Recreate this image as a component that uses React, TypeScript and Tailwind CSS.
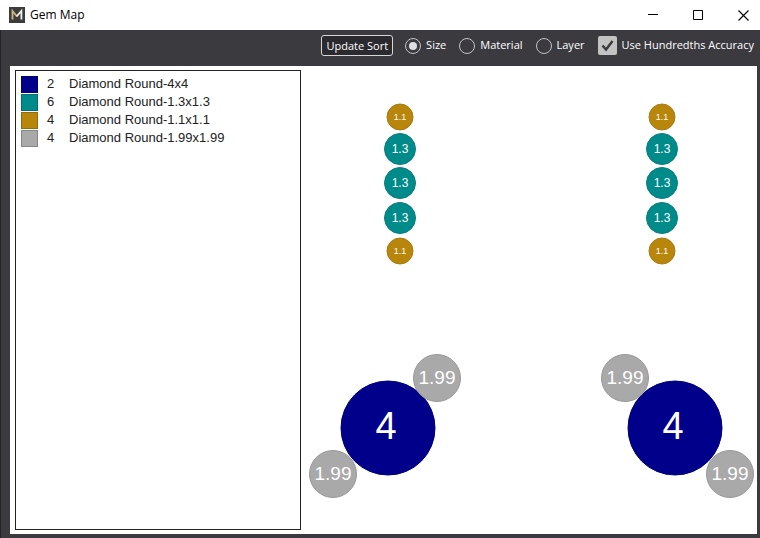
import { useState } from "react";

type Gem = { x: number; y: number; size: string };

const legend = [
  { count: 2, name: "Diamond Round-4x4", swatch: "bg-[#00008b]" },
  { count: 6, name: "Diamond Round-1.3x1.3", swatch: "bg-[#008b8b]" },
  { count: 4, name: "Diamond Round-1.1x1.1", swatch: "bg-[#b8860b]" },
  { count: 4, name: "Diamond Round-1.99x1.99", swatch: "bg-[#a9a9a9]" },
];

const gemStyles: Record<string, { r: number; circle: string; label: string; dx: number; dy: number }> = {
  "1.1": { r: 13, circle: "fill-[#b8860b] stroke-[#a87c14]", label: "text-[9px]", dx: 0, dy: 3 },
  "1.3": { r: 15.5, circle: "fill-[#008b8b] stroke-[#0c7d7d]", label: "text-[12px]", dx: 0, dy: 4 },
  "1.99": { r: 23.5, circle: "fill-[#a9a9a9] stroke-[#999999]", label: "text-[19px]", dx: 0, dy: 6 },
  "4": { r: 47, circle: "fill-[#00008b] stroke-[#00007c]", label: "text-[38px]", dx: -2, dy: 11 },
};

const gems: Gem[] = [
  { x: 99, y: 51, size: "1.1" },
  { x: 99, y: 83, size: "1.3" },
  { x: 99, y: 117, size: "1.3" },
  { x: 99, y: 152, size: "1.3" },
  { x: 99, y: 185, size: "1.1" },
  { x: 361, y: 51, size: "1.1" },
  { x: 361, y: 83, size: "1.3" },
  { x: 361, y: 117, size: "1.3" },
  { x: 361, y: 152, size: "1.3" },
  { x: 361, y: 185, size: "1.1" },
  { x: 87, y: 362, size: "4" },
  { x: 136, y: 312, size: "1.99" },
  { x: 32, y: 408, size: "1.99" },
  { x: 374, y: 362, size: "4" },
  { x: 324, y: 312, size: "1.99" },
  { x: 429, y: 408, size: "1.99" },
];

const sortModes = ["Size", "Material", "Layer"];

function TitleBar() {
  return (
    <header className="flex h-[30px] items-center bg-white pl-[9px] text-black">
      <svg className="h-4 w-4" viewBox="0 0 16 16" aria-hidden="true">
        <rect width="16" height="16" fill="#3c3c3a" />
        <path d="M3.5 12.5V4L8 9.5" fill="none" stroke="#c9b886" strokeWidth="1.8" />
        <path d="M7.6 9.5L12.4 4v8.5" fill="none" stroke="#f2f0ea" strokeWidth="1.8" />
      </svg>
      <h1 className="ml-[5px] text-[12px]">Gem Map</h1>
      <div className="ml-auto flex h-full">
        <button className="flex w-[46px] items-center justify-center" aria-label="Minimize">
          <svg className="h-[11px] w-[11px]" viewBox="0 0 11 11" aria-hidden="true">
            <path d="M0 4.5h10" stroke="currentColor" />
          </svg>
        </button>
        <button className="flex w-[45px] items-center justify-center" aria-label="Maximize">
          <svg className="h-[11px] w-[11px]" viewBox="0 0 11 11" aria-hidden="true">
            <path d="M.5 .5h9v9h-9z" fill="none" stroke="currentColor" />
          </svg>
        </button>
        <button className="flex w-[39px] items-center pl-[17px]" aria-label="Close">
          <svg className="h-[11px] w-[11px] flex-none" viewBox="0 0 11 11" aria-hidden="true">
            <path d="M.5 .5l10 10M10.5 .5l-10 10" stroke="currentColor" strokeWidth="1.1" />
          </svg>
        </button>
      </div>
    </header>
  );
}

function Toolbar() {
  const [mode, setMode] = useState("Size");
  const [hundredths, setHundredths] = useState(true);

  return (
    <div className="flex h-9 items-center justify-end pr-[6px] pb-[5px] text-[11px] text-white">
      <button className="mr-3 h-[21px] rounded-[3px] border border-[#d8d8da] bg-[#2b2a2f] px-1 leading-none">
        Update Sort
      </button>
      {sortModes.map((m) => (
        <label key={m} className="mr-[13px] flex items-center gap-[5px]">
          <span className="relative flex">
            <input
              type="radio"
              name="sort"
              checked={mode === m}
              onChange={() => setMode(m)}
              className="peer h-4 w-4 appearance-none rounded-full border border-[#c4c4c8]"
            />
            <span className="pointer-events-none absolute inset-1 hidden rounded-full bg-[#dedee2] peer-checked:block" />
          </span>
          {m}
        </label>
      ))}
      <label className="flex items-center gap-[5px]">
        <span className="relative flex">
          <input
            type="checkbox"
            checked={hundredths}
            onChange={(e) => setHundredths(e.target.checked)}
            className="peer h-[19px] w-[19px] appearance-none rounded-[2px] bg-[#c3c3c4]"
          />
          <svg
            className="pointer-events-none absolute inset-0 hidden h-[19px] w-[19px] peer-checked:block"
            viewBox="0 0 19 19"
            aria-hidden="true"
          >
            <path d="M4.5 9.5l3.5 4 6.5-8.5" fill="none" stroke="#3b3b3e" strokeWidth="2.4" />
          </svg>
        </span>
        Use Hundredths Accuracy
      </label>
    </div>
  );
}

export default function App() {
  return (
    <div className="flex min-h-screen flex-col bg-[#3b3a3f] font-['Open_Sans','Noto_Sans',sans-serif]">
      <TitleBar />
      <main className="flex flex-1 flex-col border-l border-[#242327]">
        <Toolbar />
        <div className="mr-[3px] mb-1 ml-[9px] flex flex-1 bg-white font-['Liberation_Sans',Arial,sans-serif]">
          <ul className="my-1 ml-[5px] w-[286px] border border-[#222222] px-[5px] pt-1 text-[13px] text-[#222222]">
            {legend.map((item) => (
              <li key={item.name} className="flex h-[18px] items-center">
                <span className={`h-[17px] w-[17px] border border-black/20 ${item.swatch}`} />
                <span className="ml-[9px] w-[22px]">{item.count}</span>
                <span>{item.name}</span>
              </li>
            ))}
          </ul>
          <svg className="min-w-0 flex-1" viewBox="0 0 456 468" role="img" aria-label="Gem map">
            {gems.map((g) => {
              const s = gemStyles[g.size];
              return (
                <g key={`${g.x}-${g.y}`}>
                  <circle cx={g.x} cy={g.y} r={s.r} className={s.circle} />
                  <text x={g.x + s.dx} y={g.y + s.dy} textAnchor="middle" className={`fill-white ${s.label}`}>
                    {g.size}
                  </text>
                </g>
              );
            })}
          </svg>
        </div>
      </main>
    </div>
  );
}
